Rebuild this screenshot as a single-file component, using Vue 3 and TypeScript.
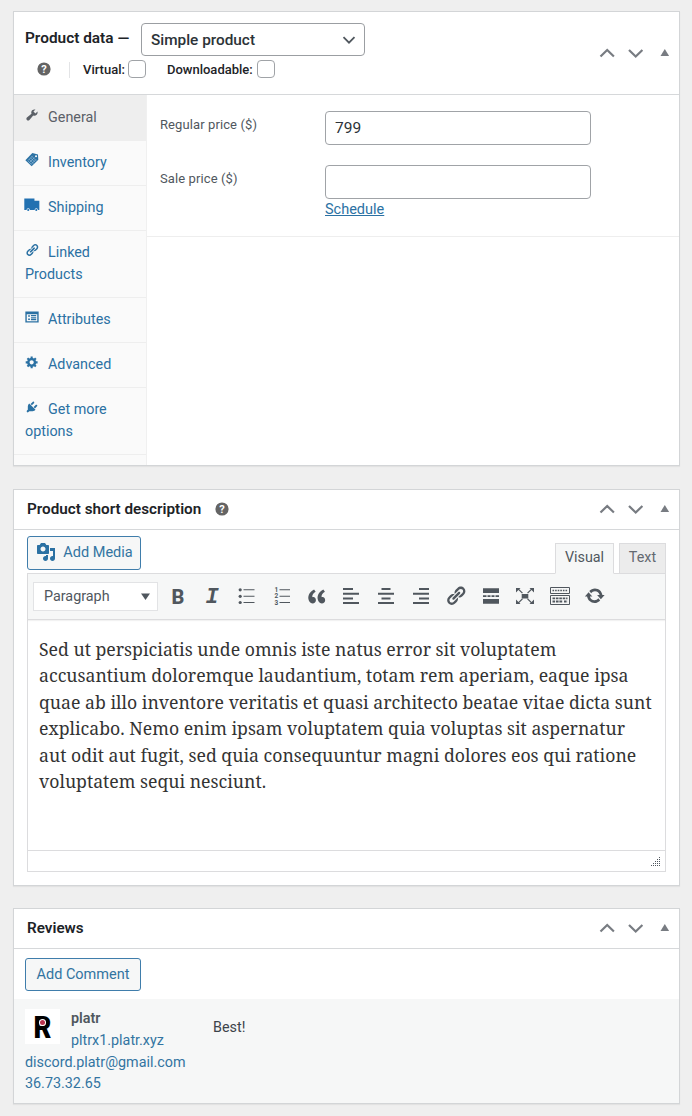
<script setup lang="ts">
interface Tab {
  label: string
  icon: string
  active?: boolean
}

const tabs: Tab[] = [
  { label: 'General', icon: 'wrench', active: true },
  { label: 'Inventory', icon: 'tag' },
  { label: 'Shipping', icon: 'truck' },
  { label: 'Linked Products', icon: 'link' },
  { label: 'Attributes', icon: 'list' },
  { label: 'Advanced', icon: 'gear' },
  { label: 'Get more options', icon: 'plug' },
]

const tools: string[] = [
  'bold', 'italic', 'ul', 'ol', 'quote', 'left', 'center', 'right',
  'link', 'more', 'expand', 'keyboard', 'refresh',
]

const lines: string[] = [
  'Sed ut perspiciatis unde omnis iste natus error sit voluptatem',
  'accusantium doloremque laudantium, totam rem aperiam, eaque ipsa',
  'quae ab illo inventore veritatis et quasi architecto beatae vitae dicta sunt',
  'explicabo. Nemo enim ipsam voluptatem quia voluptas sit aspernatur',
  'aut odit aut fugit, sed quia consequuntur magni dolores eos qui ratione',
  'voluptatem sequi nesciunt.',
]

const paths: Record<string, string> = {
  wrench: 'M16.68 9.77c-1.34 1.34-3.3 1.67-4.95.99l-5.41 6.52c-.99.99-2.59.99-3.58 0s-.99-2.59 0-3.57l6.52-5.42c-.68-1.65-.35-3.61.99-4.95 1.28-1.28 3.12-1.62 4.72-1.06l-2.89 2.89 2.82 2.82 2.86-2.87c.53 1.58.18 3.39-1.08 4.65z',
  link: 'M17.74 2.76c1.68 1.69 1.68 4.41 0 6.1l-1.53 1.52c-1.12 1.12-2.7 1.47-4.14 1.09l2.62-2.61.76-.77.76-.76c.84-.84.84-2.2 0-3.04-.84-.85-2.2-.85-3.04 0l-.77.76-3.38 3.38c-.37-1.44-.02-3.02 1.1-4.14l1.52-1.53c1.69-1.68 4.42-1.68 6.1 0zM8.59 13.43l5.34-5.34c.42-.42.42-1.1 0-1.52-.44-.43-1.13-.39-1.53 0l-5.33 5.34c-.42.42-.42 1.1 0 1.52.44.43 1.13.39 1.52 0zm-.76 2.29l4.14-4.15c.38 1.44.03 3.02-1.09 4.14l-1.52 1.53c-1.69 1.68-4.41 1.68-6.1 0-1.68-1.68-1.68-4.42 0-6.1l1.53-1.52c1.12-1.12 2.7-1.47 4.14-1.1l-4.14 4.15c-.85.84-.85 2.2 0 3.05.84.84 2.2.84 3.04 0z',
  gear: 'M18 12h-2.18c-.17.7-.44 1.35-.81 1.93l1.54 1.54-2.1 2.1-1.54-1.54c-.58.36-1.23.63-1.91.79V19H8v-2.18c-.68-.16-1.33-.43-1.91-.79l-1.54 1.54-2.12-2.12 1.54-1.54c-.36-.58-.63-1.23-.79-1.91H1V9.03h2.17c.16-.7.44-1.35.8-1.94L2.43 5.55l2.1-2.1 1.54 1.54c.58-.37 1.24-.64 1.93-.81V2h3v2.18c.68.16 1.33.43 1.91.79l1.54-1.54 2.12 2.12-1.54 1.54c.36.59.64 1.24.8 1.94H18V12zm-8.5 1.5c1.66 0 3-1.34 3-3s-1.34-3-3-3-3 1.34-3 3 1.34 3 3 3z',
  plug: 'M13.11 4.36L9.87 7.6 8 5.73l3.24-3.24c.35-.34 1.05-.2 1.56.32.52.51.66 1.21.31 1.55zm-8 1.77l.91-1.12 9.01 9.01-1.19.84c-.71.71-2.63 1.16-3.82 1.16H6.14L4.9 17.26c-.59.59-1.54.59-2.12 0-.59-.58-.59-1.53 0-2.12l1.24-1.24v-3.88c0-1.13.4-3.19 1.09-3.89zm7.26 3.97l3.24-3.24c.34-.35 1.04-.21 1.55.31.52.51.66 1.21.31 1.55l-3.24 3.25z',
  truck: 'M-1 0.800h14.500v3H20.500V17h-2a2.400 2.400 0 0 0-4.800 0H7a2.400 2.400 0 0 0-4.800 0H-1zM4.600 15.600a1.500 1.500 0 1 1 0 3 1.500 1.500 0 0 1 0-3zM16.100 15.600a1.500 1.500 0 1 1 0 3 1.500 1.500 0 0 1 0-3z',
  list: 'M.5 2h19v16H.5zM2.500 6v10h15V6zM4.500 7.500h2.500v2.200H4.500zM4.500 12h2.500v2.200H4.500zM8.500 7.300H16v1.800H8.500zM8.500 10.200H16V12H8.500zM8.500 13H16v1.800H8.500z',
  quote: 'M9.49 13.22c0-.74-.2-1.38-.61-1.9-.62-.78-1.83-.88-2.53-.72-.29-1.65 1.11-3.75 2.92-4.65L7.88 4c-2.73 1.3-5.42 4.28-4.96 8.05C3.21 14.43 4.59 16 6.54 16c.85 0 1.56-.25 2.12-.75s.83-1.18.83-2.03zm8.05 0c0-.74-.2-1.38-.61-1.9-.63-.78-1.83-.88-2.53-.72-.29-1.65 1.11-3.75 2.92-4.65L15.93 4c-2.73 1.3-5.41 4.28-4.95 8.05.29 2.38 1.66 3.95 3.61 3.95.85 0 1.56-.25 2.12-.75s.83-1.18.83-2.03z',
  left: 'M2 2h10v2H2zM2 6.700h16v2H2zM2 11.400h10v2H2zM2 16h16v2H2z',
  center: 'M5.500 2h9v2h-9zM2 6.700h16v2H2zM5.500 11.400h9v2h-9zM2 16h16v2H2z',
  right: 'M8 2h10v2H8zM2 6.700h16v2H2zM8 11.400h10v2H8zM2 16h16v2H2z',
  more: 'M2 2.300h16v4.700H2zM2 9.200h3.500v1.700H2zM6.500 9.200h3v1.700h-3zM10.500 9.200h3v1.700h-3zM14.500 9.200H18v1.700h-3.500zM2 13h16v4.700H2z',
  expand: 'M6.700 8h6.600v4.400H6.700zM1 2h4.500L4.300 3.200 7.900 6.700l-.9.9L3.400 4.100 1 6.500zM19 2h-4.500l1.200 1.200-3.600 3.500.9.900 3.600-3.500L19 6.500zM1 18h4.500l-1.200-1.200 3.600-3.500-.9-.9-3.600 3.500L1 13.500zM19 18h-4.500l1.200-1.200-3.600-3.500.9-.9 3.600 3.500 2.400-2.400z',
  refresh: 'M10.2 3.28c3.53 0 6.43 2.61 6.92 6h2.08l-3.5 4-3.5-4h2.32c-.45-1.97-2.21-3.45-4.32-3.45-1.45 0-2.73.71-3.54 1.78L4.95 5.66C6.23 4.2 8.11 3.28 10.2 3.28zm-.4 13.44c-3.52 0-6.43-2.61-6.92-6H.8l3.5-4c1.17 1.33 2.33 2.67 3.5 4H5.48c.45 1.97 2.21 3.45 4.32 3.45 1.45 0 2.73-.71 3.54-1.78l1.71 1.95c-1.28 1.46-3.15 2.38-5.25 2.38z',
  media: 'M13 11V4c0-.55-.45-1-1-1h-1.67L9 1H5L3.67 3H2c-.55 0-1 .45-1 1v7c0 .55.45 1 1 1h10c.55 0 1-.45 1-1zM7 4.5c1.38 0 2.5 1.12 2.5 2.5S8.38 9.5 7 9.5 4.5 8.38 4.5 7 5.62 4.5 7 4.5zM14 6h5v10.5c0 1.38-1.12 2.5-2.5 2.5S14 17.88 14 16.5s1.12-2.5 2.5-2.5c.17 0 .34.02.5.05V9h-3V6zm-4 8.05V13h2v3.5c0 1.38-1.12 2.5-2.5 2.5S7 17.88 7 16.5 8.12 14 9.5 14c.17 0 .34.02.5.05z',
}

const gripDots: number[][] = [
  [9, 0], [7, 2], [9, 2], [5, 4], [7, 4], [9, 4], [3, 6], [5, 6], [7, 6], [9, 6],
  [1, 8], [3, 8], [5, 8], [7, 8], [9, 8],
]
</script>

<template>
  <main class="page">
    <section class="panel product">
      <header class="head tall">
        <div class="head-main">
          <div class="row-a">
            <b class="title data-title">Product data —</b>
            <div class="type-select">
              <span>Simple product</span>
              <svg width="14" height="8" viewBox="0 0 14 8"><path d="M1.500 1.200 7 6.700l5.500-5.500" fill="none" stroke="#50575e" stroke-width="1.800" /></svg>
            </div>
          </div>
          <div class="row-b">
            <svg class="help" width="14" height="14" viewBox="0 0 14 14"><circle cx="7" cy="7" r="6.600" /><text x="7" y="10.700" text-anchor="middle">?</text></svg>
            <i class="divider"></i>
            <label class="virtual">Virtual:<span class="box"></span></label>
            <label class="download">Downloadable:<span class="box"></span></label>
          </div>
        </div>
        <div class="handles">
          <svg width="76" height="14" viewBox="0 0 76 14"><path d="M1.500 10.500 8.200 4l6.700 6.500M30 4l6.700 6.500L43.400 4" fill="none" stroke="#787c82" stroke-width="2.200" /><path d="M61.500 10 65.800 3l4.300 7z" fill="#787c82" /></svg>
        </div>
      </header>
      <div class="data-body">
        <nav class="tabs">
          <a v-for="t in tabs" :key="t.label" class="tab" :class="{ active: t.active }">
            <svg class="tab-icon" :class="t.icon" viewBox="0 0 20 20">
              <g v-if="t.icon === 'tag'">
                <path d="M10.500 0 18.500 2l.5 7.500-9.500 9.500L.5 10.500z" />
                <path d="M10 5l6 6M8 7l6 6M6 9l6 6M4.500 11.500l5 5M4 11l7-7M6.500 13.500l7-7M9 16l7-7" stroke="#a9c9e2" stroke-width=".8" />
                <circle cx="15.800" cy="4.700" r="1.500" fill="#f6f7f7" />
              </g>
              <path v-else fill-rule="evenodd" :d="paths[t.icon]" />
            </svg><span>{{ t.label }}</span>
          </a>
        </nav>
        <div class="fields">
          <div class="field-group">
            <div class="field first"><label>Regular price ($)</label><div class="input">799</div></div>
            <div class="field second"><label>Sale price ($)</label><div><div class="input"></div><a class="schedule">Schedule</a></div></div>
          </div>
        </div>
      </div>
    </section>

    <section class="panel short">
      <header class="head">
        <div class="title-wrap"><b class="title short-title">Product short description</b>
          <svg class="help" width="14" height="14" viewBox="0 0 14 14"><circle cx="7" cy="7" r="6.600" /><text x="7" y="10.700" text-anchor="middle">?</text></svg>
        </div>
        <div class="handles">
          <svg width="76" height="14" viewBox="0 0 76 14"><path d="M1.500 10.500 8.200 4l6.700 6.500M30 4l6.700 6.500L43.400 4" fill="none" stroke="#787c82" stroke-width="2.200" /><path d="M61.500 10 65.800 3l4.300 7z" fill="#787c82" /></svg>
        </div>
      </header>
      <div class="editor-wrap">
        <div class="editor-top">
          <button class="btn media"><svg width="20" height="20" viewBox="0 0 20 20"><path fill-rule="evenodd" :d="paths.media" /></svg><span>Add Media</span></button>
          <div class="modes"><span class="mode on">Visual</span><span class="mode">Text</span></div>
        </div>
        <div class="editor">
          <div class="toolbar">
            <div class="format"><span>Paragraph</span><svg width="9" height="8" viewBox="0 0 9 8"><path d="M0 .5h9L4.500 7z" fill="#50575e" /></svg></div>
            <div class="tools">
              <span v-for="k in tools" :key="k" class="tool">
                <span v-if="k === 'bold'" class="glyph bold">B</span>
                <span v-else-if="k === 'italic'" class="glyph italic">I</span>
                <svg v-else-if="k === 'ul'" viewBox="0 0 20 20"><circle cx="3.200" cy="3.800" r="1.600" /><circle cx="3.200" cy="10.300" r="1.600" /><circle cx="3.200" cy="16.500" r="1.600" /><path d="M6.500 3.300h11v1h-11zM6.500 9.800h11v1h-11zM6.500 16h11v1h-11z" /></svg>
                <svg v-else-if="k === 'ol'" viewBox="0 0 20 20"><g font-size="6.500" font-weight="700" font-family="Roboto"><text x="2.500" y="5.600">1</text><text x="2.500" y="11.800">2</text><text x="2.500" y="18.500">3</text></g><path d="M7.500 3.300h10.500v1H7.500zM7.500 9.800h10.500v1H7.500zM7.500 16h10.500v1H7.500z" /></svg>
                <svg v-else-if="k === 'keyboard'" viewBox="0 0 20 20"><path d="M.5 1.500h19v6H.5zM.5 9.500h19v9H.5z" fill="none" stroke="#50575e" stroke-width="1" /><path d="M2.500 4.500h15" stroke="#50575e" stroke-width="1.700" stroke-dasharray="1.600 1" /><path d="M2.500 12.300h15M2.500 15.500h2.600M6 15.500h7M14 15.500h3.500" stroke="#50575e" stroke-width="1.800" stroke-dasharray="2.600 .8" /></svg>
                <svg v-else viewBox="0 0 20 20" :class="k"><path fill-rule="evenodd" :d="paths[k]" /></svg>
              </span>
            </div>
          </div>
          <div class="content"><p v-for="(l, i) in lines" :key="i" class="line">{{ l }}</p></div>
          <div class="status"><svg width="11" height="10" viewBox="0 0 11 10"><rect v-for="(d, i) in gripDots" :key="i" :x="d[0]" :y="d[1]" width="1" height="1" fill="#50575e" /></svg></div>
        </div>
      </div>
    </section>

    <section class="panel reviews">
      <header class="head">
        <div class="title-wrap"><b class="title">Reviews</b></div>
        <div class="handles">
          <svg width="76" height="14" viewBox="0 0 76 14"><path d="M1.500 10.500 8.200 4l6.700 6.500M30 4l6.700 6.500L43.400 4" fill="none" stroke="#787c82" stroke-width="2.200" /><path d="M61.500 10 65.800 3l4.300 7z" fill="#787c82" /></svg>
        </div>
      </header>
      <div class="add-row"><button class="btn comment">Add Comment</button></div>
      <div class="review">
        <div class="author">
          <div class="who">
            <div class="avatar"><span>R</span><i></i></div>
            <div><strong>platr</strong><a>pltrx1.platr.xyz</a></div>
          </div>
          <a class="mail">discord.platr@gmail.com</a>
          <a class="ip">36.73.32.65</a>
        </div>
        <p class="said">Best!</p>
      </div>
    </section>
  </main>
</template>

<style>
html, body { background: #efefef; overflow: hidden; }
</style>
<style scoped>
* { box-sizing: border-box; }
.page { width: 692px; height: 1116px; padding: 11px 12px 0 13px; background: #efefef; font: 14.350px/22px Roboto, sans-serif; color: #3c434a; display: flex; flex-direction: column; overflow: hidden; }
.panel { width: 667px; background: #fff; border: 1px solid #d3d5d7; flex: none; box-shadow: 0 1px 1px rgba(0,0,0,.05); }
.product { height: 455px; }
.short { height: 397px; margin-top: 22.500px; }
.reviews { height: 196px; margin-top: 22.500px; }
.head { height: 40px; border-bottom: 1px solid #d6d8da; display: flex; justify-content: space-between; align-items: center; }
.head.tall { height: 83px; }
.title { font-weight: 600; color: #1d2327; font-size: 15.250px; }
.title-wrap { display: flex; align-items: center; padding-left: 13px; gap: 14px; }
.reviews .title-wrap { padding-bottom: 2px; }
.handles { display: flex; width: 80px; padding-bottom: 1px; }
.help { fill: #646464; display: block; overflow: visible; }
.help text { fill: #fff; font: 700 11px Roboto; }
.head-main { align-self: flex-start; padding: 11px 0 0 11px; }
.row-a { display: flex; height: 33px; }
.data-title { width: 116px; line-height: 30px; font-size: 15.400px; white-space: nowrap; }
.type-select { width: 224px; height: 33px; border: 1px solid #9b9ea2; border-radius: 4px; display: flex; align-items: center; justify-content: space-between; padding: 0 8px 0 9px; font-size: 15.350px; font-weight: 500; color: #2c3338; }
.row-b { display: flex; height: 26px; align-items: center; font-size: 13px; font-weight: 500; color: #1d2327; padding: 2px 0 0 12px; }
.row-b .help { margin-top: -2px; }
.divider { width: 1px; height: 16px; background: #e3e4e6; margin: 0 13px 0 18px; }
.row-b label { display: flex; align-items: center; }
.row-b .virtual { margin-right: 21px; }
.box { width: 18px; height: 18px; border: 1px solid #a0a3a7; border-radius: 4px; margin: -2px 0 0 3px; background: #fff; }
.row-b .download .box { margin-left: 4px; }
.data-body { display: flex; height: 370px; }
.tabs { width: 133px; background: #fafafa; border-right: 1px solid #f0f0f0; flex: none; }
.tab { display: block; padding: 11px 30px 11px 11px; border-bottom: 1px solid #eee; color: #2b71a3; line-height: 22px; }
.tab.active { background: #eee; color: #5b6067; padding-top: 12px; }
.tab-icon { width: 14px; height: 14px; fill: currentColor; margin-right: 9px; vertical-align: 0; overflow: visible; }
.tab-icon.truck { fill: #2271b1; }
.fields { flex: 1; }
.field-group { height: 142px; border-bottom: 1px solid #eee; padding: 16px 0 0 13px; }
.field { display: flex; height: 54px; font-size: 13px; color: #50575e; }
.field label { width: 165px; line-height: 27px; letter-spacing: .1px; }
.input { width: 266px; height: 34px; border: 1px solid #a0a3a7; border-radius: 4px; font-size: 15.500px; color: #2c3338; padding: 0 9px; line-height: 32px; }
.schedule { display: block; font-size: 14.500px; line-height: 22px; color: #2b71a3; text-decoration: underline; }
.editor-wrap { padding: 6px 13px 0; }
.editor-top { display: flex; justify-content: space-between; height: 37px; }
.btn { font: 14.500px Roboto, sans-serif; color: #3274a1; background: #f6f7f7; border: 1px solid #3f7dab; border-radius: 3px; display: flex; align-items: center; justify-content: center; height: 34px; }
.media { width: 114px; gap: 7px; padding: 0 0 0 1px; }
.media svg { fill: #2b71a3; margin-top: -1px; }
.modes { display: flex; gap: 5px; align-self: flex-end; height: 31px; margin-bottom: -1px; }
.mode { border: 1px solid #dcdcde; background: #ececec; width: 47px; text-align: center; line-height: 27px; color: #646970; position: relative; }
.mode.on { width: 59px; background: #f6f7f7; border-bottom-color: #f6f7f7; color: #50575e; z-index: 1; }
.editor { border: 1px solid #dcdcde; height: 299px; display: flex; flex-direction: column; }
.toolbar { height: 46px; background: #f6f7f7; border-bottom: 1px solid #dcdcde; box-shadow: 0 1px 1px rgba(0,0,0,.05); display: flex; align-items: center; padding-left: 5px; flex: none; }
.format { width: 125px; height: 29px; background: #fff; border: 1px solid #e2e3e5; display: flex; align-items: center; justify-content: space-between; padding: 1px 7px 0 10px; color: #50575e; }
.format svg { margin-top: 1px; }
.tools { display: flex; margin-left: 2px; }
.tool { width: 34.800px; height: 22px; display: flex; justify-content: center; align-items: center; }
.tool svg { width: 20px; height: 20px; fill: #50575e; display: block; overflow: visible; flex: none; }
.tool svg.quote { width: 23px; height: 23px; }
.tool svg.link, .tool svg.refresh { width: 21.500px; height: 21.500px; }
.glyph { color: #50575e; line-height: 22px; }
.bold { font-size: 20px; font-weight: 800; padding: 1px 0 0 1px; }
.italic { font: italic 700 22px/22px "Liberation Mono", monospace; padding-top: 4px; }
.content { flex: 1; padding: 16px 0 0 11px; font-family: "Noto Serif", "DejaVu Serif", serif; font-size: 17.670px; color: #333; }
.line { margin: 0; height: 26.500px; line-height: 26.500px; white-space: nowrap; }
.status { height: 21px; border-top: 1px solid #dcdcde; display: flex; justify-content: flex-end; align-items: center; padding: 2px 4px 0 0; }
.add-row { padding: 9px 11px; height: 50px; }
.comment { width: 116px; height: 33px; padding-bottom: 2px; }
.review { height: 104px; background: #f6f7f7; display: flex; padding: 9px 11px 0; }
.author { width: 188px; color: #3274a1; }
.author a { display: block; }
.who { display: flex; gap: 11px; height: 44px; }
.who strong { display: block; font-weight: 600; color: #50575e; line-height: 22px; }
.avatar { width: 35px; height: 35px; margin-top: 1px; background: #fff; position: relative; text-align: center; }
.avatar span { display: block; color: #000; font: 900 32px/37px Roboto, sans-serif; transform: scaleX(.86); }
.avatar i { position: absolute; left: 14.500px; top: 11px; width: 5px; height: 5px; border-radius: 50%; background: #b8324f; box-shadow: 0 0 0 1px #fff; }
.ip { line-height: 20px; }
.said { margin: 9px 0 0; }
</style>
